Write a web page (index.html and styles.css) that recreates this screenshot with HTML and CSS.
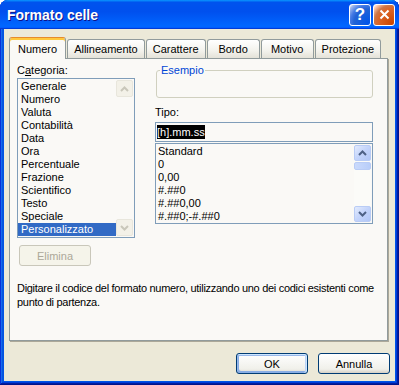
FILE: index.html
```html
<!DOCTYPE html>
<html lang="it">
<head>
    <meta charset="UTF-8">
    <title>Formato celle</title>
    <link rel="stylesheet" href="styles.css">
</head>
<body>
    <div class="finestra">
        <div class="barra-titolo">
            <span class="titolo">Formato celle</span>
            <div class="pulsanti-titolo">
                <span class="pt pt-aiuto">?</span>
                <span class="pt pt-chiudi">
                    <svg width="11" height="11" viewBox="0 0 11 11"><path d="M1.5 1.5 L9.5 9.5 M9.5 1.5 L1.5 9.5" stroke="#fff" stroke-width="2" fill="none"/></svg>
                </span>
            </div>
        </div>
        <div class="area">
            <div class="schede">
                <div class="scheda attiva">Numero</div>
                <div class="scheda">Allineamento</div>
                <div class="scheda">Carattere</div>
                <div class="scheda">Bordo</div>
                <div class="scheda">Motivo</div>
                <div class="scheda">Protezione</div>
            </div>
            <div class="pannello">
                <div class="colonna-sx">
                    <div class="etichetta">C<u>a</u>tegoria:</div>
                    <div class="lista lista-cat">
                        <div class="voci">
                            <div class="voce">Generale</div>
                            <div class="voce">Numero</div>
                            <div class="voce">Valuta</div>
                            <div class="voce">Contabilità</div>
                            <div class="voce">Data</div>
                            <div class="voce">Ora</div>
                            <div class="voce">Percentuale</div>
                            <div class="voce">Frazione</div>
                            <div class="voce">Scientifico</div>
                            <div class="voce">Testo</div>
                            <div class="voce">Speciale</div>
                            <div class="voce selezionata">Personalizzato</div>
                        </div>
                        <div class="scorri spento">
                            <div class="freccia"><svg width="9" height="6" viewBox="0 0 9 6"><path d="M1 5 L4.5 1.5 L8 5" stroke="#c9c7ba" stroke-width="2" fill="none"/></svg></div>
                            <div class="binario"></div>
                            <div class="freccia"><svg width="9" height="6" viewBox="0 0 9 6"><path d="M1 1 L4.5 4.5 L8 1" stroke="#c9c7ba" stroke-width="2" fill="none"/></svg></div>
                        </div>
                    </div>
                    <button class="pulsante disattivo">Elimina</button>
                </div>
                <div class="colonna-dx">
                    <fieldset class="esempio">
                        <legend>Esempio</legend>
                    </fieldset>
                    <div class="etichetta etichetta-tipo">Tipo:</div>
                    <div class="campo"><span class="testo-sel">[h].mm.ss</span></div>
                    <div class="lista lista-fmt">
                        <div class="voci">
                            <div class="voce">Standard</div>
                            <div class="voce">0</div>
                            <div class="voce">0,00</div>
                            <div class="voce">#.##0</div>
                            <div class="voce">#.##0,00</div>
                            <div class="voce">#.##0;-#.##0</div>
                        </div>
                        <div class="scorri">
                            <div class="freccia"><svg width="9" height="6" viewBox="0 0 9 6"><path d="M1 5 L4.5 1.5 L8 5" stroke="#4d6185" stroke-width="2" fill="none"/></svg></div>
                            <div class="binario"><div class="cursore"></div></div>
                            <div class="freccia"><svg width="9" height="6" viewBox="0 0 9 6"><path d="M1 1 L4.5 4.5 L8 1" stroke="#4d6185" stroke-width="2" fill="none"/></svg></div>
                        </div>
                    </div>
                </div>
                <p class="suggerimento">Digitare il codice del formato numero, utilizzando uno dei codici esistenti come punto di partenza.</p>
            </div>
            <div class="pulsanti">
                <button class="pulsante predefinito">OK</button>
                <button class="pulsante">Annulla</button>
            </div>
        </div>
    </div>
</body>
</html>
```

FILE: styles.css
```css
* {
    box-sizing: border-box;
}
body {
    margin: 0;
    background-color: #fff;
    font-family: "Liberation Sans", Arial, sans-serif;
    font-size: 11px;
    color: #000;
}
.finestra {
    width: 399px;
    height: 385px;
    display: flex;
    flex-direction: column;
    background-color: #0055e5;
    border-radius: 8px 8px 0 0;
    overflow: hidden;
    box-shadow: inset -1px -1px #00138c, inset 1px 1px #0831d9, inset -2px -2px #001ea0, inset 2px 2px #166aee, inset -3px -3px #003bda, inset 3px 3px #0855dd;
}
.barra-titolo {
    height: 29px;
    flex: none;
    display: flex;
    align-items: center;
    padding: 0 4px 0 7px;
    background: linear-gradient(180deg, #0997ff, #0053ee 8%, #0050ee 40%, #06f 88%, #06f 93%, #005bff 95%, #003dd7 96%, #003dd7);
}
.titolo {
    flex: 1;
    color: #fff;
    font-weight: bold;
    font-size: 14px;
    text-shadow: 1px 1px #0f1089;
}
.pulsanti-titolo {
    display: flex;
    gap: 2px;
}
.pt {
    width: 22px;
    height: 22px;
    border: 1px solid #fff;
    border-radius: 3px;
    display: flex;
    align-items: center;
    justify-content: center;
    color: #fff;
    font-weight: bold;
    font-size: 17px;
}
.pt-aiuto {
    background: radial-gradient(circle at 90% 90%, #0054e9 0%, #2263d5 55%, #4479e4 70%, #a3bbec 90%, #fff 100%);
}
.pt-chiudi {
    background: radial-gradient(circle at 90% 90%, #cc4600 0%, #dc6527 55%, #cd7546 70%, #ffccb2 90%, #fff 100%);
}
.area {
    flex: 1;
    margin: 0 4px 4px;
    background-color: #ece9d8;
    padding: 8px 5px 0 5px;
}
.schede {
    display: flex;
    align-items: flex-end;
    height: 21px;
}
.scheda {
    position: relative;
    height: 19px;
    min-width: 53px;
    margin-right: 1px;
    padding: 3px 6px 0;
    line-height: 13px;
    text-align: center;
    border: 1px solid #919b9c;
    border-bottom: none;
    border-radius: 3px 3px 0 0;
    background: linear-gradient(#fff, #f3f2ec 60%, #e4e2d8);
}
.scheda.attiva {
    z-index: 1;
    height: 22px;
    margin-bottom: -1px;
    padding: 5px 8px 0;
    border-top-color: #e68b2c;
    background: #faf9f6;
    box-shadow: inset 0 2px #ffc83c;
}
.pannello {
    width: 379px;
    height: 283px;
    padding: 5px 3px 0 7px;
    border: 1px solid #919b9c;
    background-color: #faf9f6;
    box-shadow: 1px 1px 0 #aca899;
    display: grid;
    grid-template-columns: 118px 1fr;
    grid-template-rows: auto 1fr;
    column-gap: 20px;
    align-items: start;
}
.etichetta {
    line-height: 13px;
    margin-bottom: 1px;
}
.lista {
    display: flex;
    border: 1px solid #7f9db9;
    background-color: #faf9f6;
    padding: 1px 1px 1px 0;
}
.lista-cat {
    height: 160px;
}
.lista-fmt {
    height: 81px;
    margin-top: 1px;
}
.voci {
    flex: 1;
}
.voce {
    height: 13px;
    line-height: 13px;
    padding-left: 3px;
    white-space: nowrap;
}
.lista-fmt .voce {
    padding-left: 2px;
}
.selezionata {
    background-color: #316ac5;
    color: #fff;
}
.scorri {
    width: 17px;
    display: flex;
    flex-direction: column;
}
.binario {
    flex: 1;
    background-color: #fbfbf8;
}
.freccia {
    height: 17px;
    display: flex;
    align-items: center;
    justify-content: center;
    border: 1px solid #b9ccf5;
    border-radius: 2px;
    background: linear-gradient(135deg, #e3ebfd, #c3d4fb 50%, #b1c7f7);
}
.spento .freccia {
    border-color: #e8e6dc;
    background: #f3f1e8;
}
.spento .binario {
    background-color: #faf9f6;
}
.lista-fmt .freccia {
    height: 16px;
}
.cursore {
    height: 8px;
    margin-top: 1px;
    border: 1px solid #b9ccf5;
    border-radius: 2px;
    background: linear-gradient(90deg, #cadafc, #b8cdf9);
}
.pulsante {
    width: 72px;
    height: 21px;
    padding: 0;
    font-family: "Liberation Sans", Arial, sans-serif;
    font-size: 11px;
    color: #000;
    border: 1px solid #003c74;
    border-radius: 3px;
    background: linear-gradient(#fff, #f0f0ea 80%, #d6d0c5);
}
.pulsante.disattivo {
    margin: 7px 0 0 2px;
    color: #aca899;
    border-color: #c9c7ba;
    background: #f5f4ea;
}
.pulsante.predefinito {
    box-shadow: inset -1px 1px #cee7ff, inset 1px 2px #98b8ea, inset -2px 0 #bcd4f6, inset 1px -1px #89ade4, inset 2px -2px #89ade4;
}
.colonna-dx {
    width: 218px;
}
.esempio {
    margin: 0 0 0 1px;
    padding: 0;
    height: 34px;
    border: 1px solid #d0d0bf;
    border-radius: 3px;
}
.esempio legend {
    margin-left: 3px;
    padding: 0 1px;
    line-height: 13px;
    color: #0046d5;
}
.etichetta-tipo {
    margin: 8px 0 3px;
}
.campo {
    height: 20px;
    padding: 2px 1px 0;
    border: 1px solid #7f9db9;
    background-color: #faf9f6;
}
.testo-sel {
    display: inline-block;
    line-height: 14px;
    background-color: #000;
    color: #fff;
}
.suggerimento {
    grid-column: 1 / -1;
    margin: 15px 0 0;
    line-height: 14px;
    letter-spacing: -0.3px;
}
.pulsanti {
    display: flex;
    justify-content: flex-end;
    gap: 10px;
    margin-top: 12px;
}
```
